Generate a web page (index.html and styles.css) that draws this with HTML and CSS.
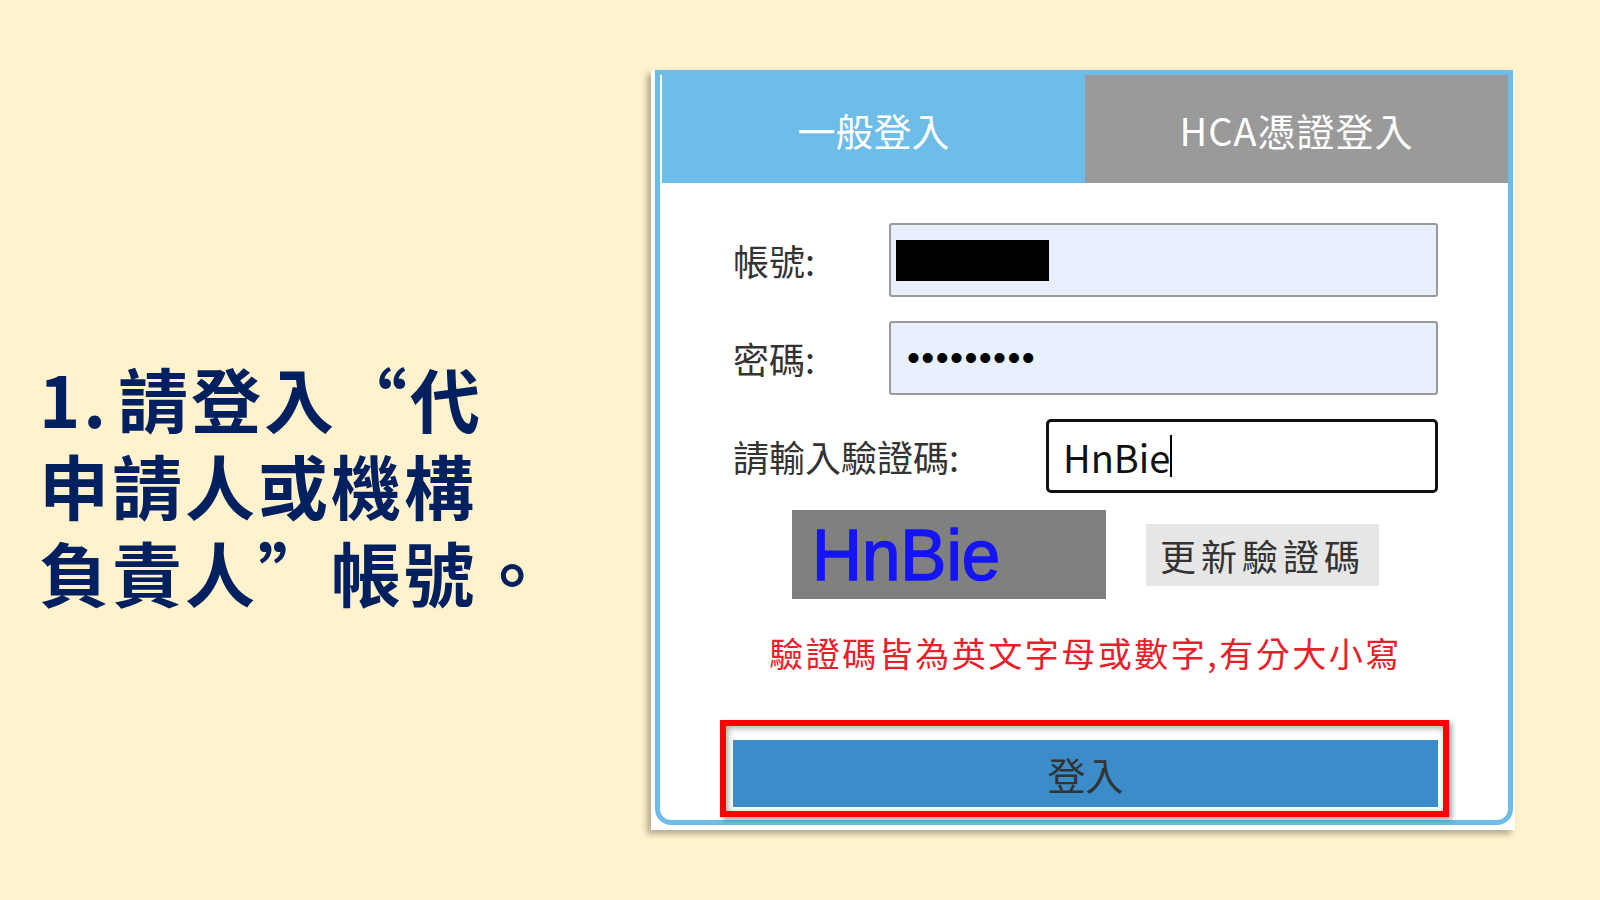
FILE: index.html
```html
<!DOCTYPE html>
<html lang="zh-Hant">
<head>
  <meta charset="UTF-8" />
  <meta name="viewport" content="width=device-width, initial-scale=1.0"/>
  <title>登入步驟說明</title>
  <link rel="stylesheet" href="styles.css">
</head>
<body>
  <div class="page">
    <h1 class="intro">1. 請登入“代<br>申請人或機構<br>負責人”帳號。</h1>

    <div class="shot">
      <div class="login">
        <div class="tabs">
          <div class="tab tab-general">一般登入</div>
          <div class="tab tab-hca">HCA憑證登入</div>
        </div>

        <div class="form">
          <div class="row">
            <div class="label">帳號:</div>
            <div class="field field-filled"><span class="redact"></span></div>
          </div>
          <div class="row">
            <div class="label">密碼:</div>
            <div class="field field-filled"><span class="dots">•••••••••</span></div>
          </div>
          <div class="row row-code">
            <div class="label label-wide">請輸入驗證碼:</div>
            <div class="field field-code">HnBie<span class="caret"></span></div>
          </div>

          <div class="captcha">
            <div class="captcha-img"><span>HnBie</span></div>
            <div class="refresh">更新驗證碼</div>
          </div>

          <div class="note">驗證碼皆為英文字母或數字,有分大小寫</div>

          <div class="submit-wrap">
            <div class="submit">登入</div>
            <div class="highlight"></div>
          </div>
        </div>
      </div>
    </div>
  </div>
</body>
</html>
```

FILE: styles.css
```css
body {
  margin: 0;
  background: #fff2cc;
  font-family: "Noto Sans CJK TC", "Noto Sans", sans-serif;
}
.page {
  display: flex;
  align-items: flex-start;
  padding: 70px 0 0 39px;
  height: 830px;
}
.intro {
  width: 612px;
  margin: 284px 0 0;
  font-size: 70px;
  line-height: 87px;
  font-weight: 700;
  letter-spacing: 3px;
  word-spacing: -10px;
  color: #002060;
}
.shot {
  width: 858px;
  padding: 0 2px 5px 4px;
  background: #fff;
  box-shadow: -4px 4px 6px rgba(0, 0, 0, 0.3);
}
.login {
  border: 5px solid #6ebde9;
  border-radius: 0 0 16px 16px;
  padding: 0 0 13px 2px;
}
.tabs {
  display: flex;
  height: 108px;
}
.tab {
  flex: 1;
  display: flex;
  align-items: center;
  justify-content: center;
  font-size: 38px;
  color: #fff;
}
.tab-general {
  background: #6ebde9;
}
.tab-hca {
  background: #9a9a9a;
  letter-spacing: 1px;
}
.form {
  padding: 40px 70px 0 71px;
}
.row {
  display: flex;
  align-items: center;
  margin-bottom: 24px;
}
.row-code {
  margin-bottom: 17px;
}
.label {
  width: 156px;
  font-size: 36px;
  color: #333;
}
.label-wide {
  width: 313px;
}
.field {
  flex: 1;
  height: 74px;
  box-sizing: border-box;
  display: flex;
  align-items: center;
  border-radius: 3px;
}
.field-filled {
  border: 2px solid #9a9a9a;
  background: #e8f0fe;
  padding-left: 5px;
}
.redact {
  width: 153px;
  height: 41px;
  background: #000;
}
.dots {
  padding-left: 11px;
  font-family: "Liberation Sans", sans-serif;
  font-size: 37px;
  letter-spacing: 1.4px;
  color: #000;
}
.field-code {
  border: 3px solid #111;
  border-radius: 5px;
  background: #fff;
  padding-left: 14px;
  font-size: 38px;
  color: #111;
}
.caret {
  width: 2px;
  height: 42px;
  background: #000;
}
.captcha {
  display: flex;
  justify-content: center;
  align-items: center;
  gap: 40px;
}
.captcha-img {
  width: 314px;
  height: 89px;
  box-sizing: border-box;
  display: flex;
  align-items: center;
  padding-left: 20px;
  background: #808080;
  color: #1414f5;
  font-family: "Liberation Sans", sans-serif;
  font-size: 72px;
}
.captcha-img span {
  display: inline-block;
  -webkit-text-stroke: 1.5px #1414f5;
  transform: scaleX(0.96);
  transform-origin: left center;
}
.refresh {
  width: 233px;
  height: 62px;
  display: flex;
  align-items: center;
  justify-content: center;
  background: #e6e6e6;
  font-size: 36px;
  letter-spacing: 5px;
  color: #333;
}
.note {
  margin-top: 34px;
  text-align: center;
  font-size: 34px;
  line-height: 40px;
  letter-spacing: 2.5px;
  color: #e8202a;
}
.submit-wrap {
  position: relative;
  margin-top: 67px;
}
.submit {
  height: 67px;
  display: flex;
  align-items: center;
  justify-content: center;
  background: #3b8cc8;
  font-size: 38px;
  color: #333;
}
.highlight {
  position: absolute;
  top: -20px;
  left: -13px;
  right: -11px;
  bottom: -10px;
  border: 6px solid #ff0000;
  box-shadow: 3px 3px 5px rgba(0, 0, 0, 0.35), inset 2px 2px 6px rgba(0, 0, 0, 0.35);
}
```
